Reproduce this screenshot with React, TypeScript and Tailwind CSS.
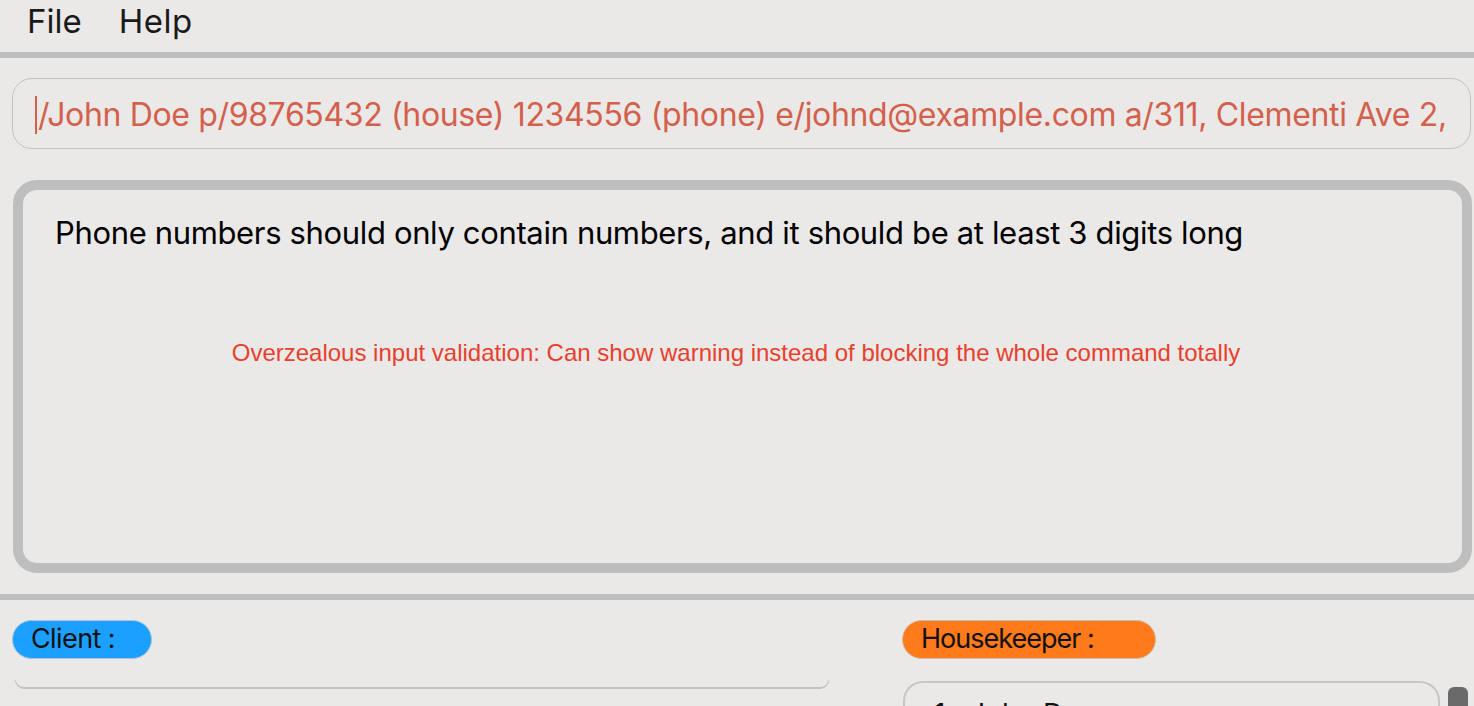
import React from "react";

const sf = { fontFamily: "Inter, 'Noto Sans', sans-serif" };

export default function App() {
  const command =
    "/John Doe p/98765432 (house) 1234556 (phone) e/johnd@example.com a/311, Clementi Ave 2, #02-25 t/friends t/owesMoney";

  return (
    <div
      className="w-[1474px] h-[706px] overflow-hidden bg-[#eae9e7] text-[#111]"
      style={sf}
    >
      {/* menu bar */}
      <div className="h-[52px] flex items-start pl-[27px] gap-[37px] text-[33px] leading-[40px] pt-[1px] text-[#1a1a1a]">
        <span>File</span>
        <span className="tracking-[0.5px]">Help</span>
      </div>
      <div className="h-[6px] bg-[#bebebe]" />

      {/* command box */}
      <div className="pt-[20px] pl-[12px] pr-[3px]">
        <div className="h-[71px] rounded-[20px] border border-[#c2c2c2] flex items-center pl-[22px] pr-[20px] pt-[2px] overflow-hidden">
          <span className="w-[2px] h-[38px] bg-[#d4604c] shrink-0" />
          <span className="whitespace-nowrap overflow-hidden text-[32px] leading-[40px] tracking-[-0.35px] text-[#d4604c] pl-[1px]">
            {command}
          </span>
        </div>
      </div>

      {/* result box */}
      <div className="pt-[31px] pl-[13px] pr-[2px]">
        <div className="h-[393px] rounded-[24px] border-[10px] border-[#bebebe] pl-[32px] pt-[23px]">
          <div className="text-[31px] leading-[40px] tracking-[-0.35px] text-black">
            Phone numbers should only contain numbers, and it should be at least 3 digits long
          </div>
          <div
            className="mt-[86px] -ml-[45px] text-center text-[24px] leading-[28px] text-[#e8402c]"
            style={{ fontFamily: "'Liberation Sans', Arial, sans-serif" }}
          >
            Overzealous input validation: Can show warning instead of blocking the whole command totally
          </div>
        </div>
      </div>

      <div className="mt-[21px] h-[6px] bg-[#bebebe]" />

      {/* lists */}
      <div className="flex pt-[20px]">
        <div className="w-[902px] pl-[12px] flex flex-col">
          <div className="w-[140px] h-[39px] rounded-full bg-[#1ba0ff] border border-[#a9c3da] flex items-center pl-[18px] text-[27px] tracking-[-0.6px]">
            Client :
          </div>
          <div className="mt-[21px] ml-[3px] w-[814px] h-[9px] rounded-b-[9px] border-x border-b-[2px] border-[#c2c2c2] border-t-0" />
        </div>
        <div className="flex-1 flex flex-col">
          <div className="w-[254px] h-[39px] rounded-full bg-[#fe7a1b] border border-[#d2bca8] flex items-center pl-[18px] text-[27px] tracking-[-1px]">
            Housekeeper :
          </div>
          <div className="mt-[22px] flex gap-[8px] items-start">
            <div className="ml-[1px] w-[537px] h-[60px] rounded-t-[20px] border-2 border-b-0 border-[#c6c6c6] pl-[29px] pt-[14px] text-[28px] leading-[34px]">
              1.&nbsp;&nbsp;John Doe
            </div>
            <div className="mt-[6px] w-[20px] h-[60px] rounded-[6px] bg-[#6a6a6a]" />
          </div>
        </div>
      </div>
    </div>
  );
}
